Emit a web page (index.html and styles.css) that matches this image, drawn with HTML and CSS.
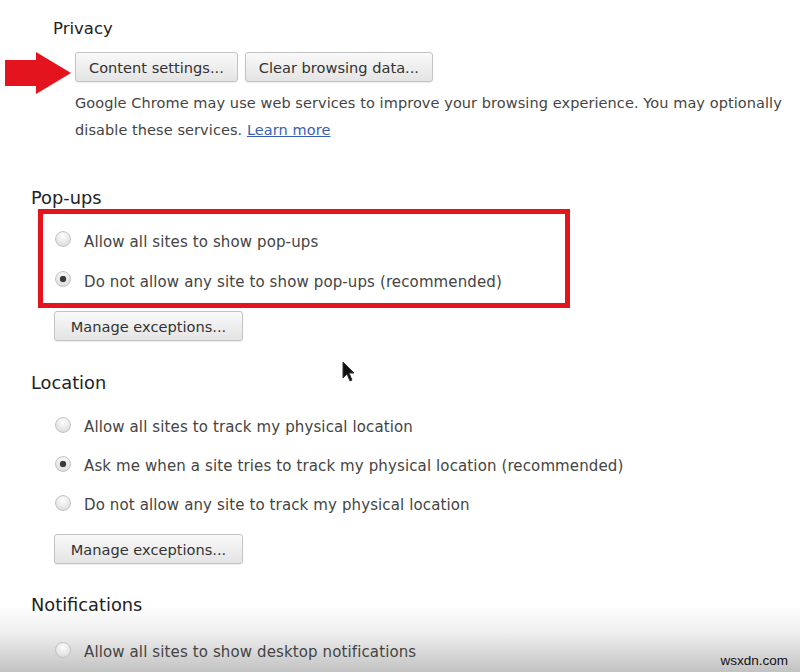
FILE: index.html
```html
<!DOCTYPE html>
<html>
<head>
<meta charset="utf-8">
<link rel="stylesheet" href="styles.css">
</head>
<body>
<div class="page">
  <section class="privacy">
    <h2 class="privacy-title">Privacy</h2>
    <div class="btn-row">
      <button class="btn">Content settings...</button>
      <button class="btn">Clear browsing data...</button>
    </div>
    <p class="desc">Google Chrome may use web services to improve your browsing experience. You may optionally disable these services. <a href="#" class="link">Learn more</a></p>
    <svg class="arrow" width="66" height="42" viewBox="0 0 66 42"><path d="M0 8 H31 V0 L66 21 L31 42 V34 H0 Z" fill="#e3141d"/></svg>
  </section>

  <section class="group popups">
    <h2 class="title">Pop-ups</h2>
    <div class="highlight">
      <label class="radio-row"><span class="radio"></span><span class="label">Allow all sites to show pop-ups</span></label>
      <label class="radio-row"><span class="radio checked"></span><span class="label">Do not allow any site to show pop-ups (recommended)</span></label>
    </div>
    <button class="btn manage">Manage exceptions...</button>
  </section>

  <section class="group location">
    <h2 class="title">Location</h2>
    <div class="options">
      <label class="radio-row"><span class="radio"></span><span class="label">Allow all sites to track my physical location</span></label>
      <label class="radio-row"><span class="radio checked"></span><span class="label">Ask me when a site tries to track my physical location (recommended)</span></label>
      <label class="radio-row"><span class="radio"></span><span class="label">Do not allow any site to track my physical location</span></label>
    </div>
    <button class="btn manage">Manage exceptions...</button>
  </section>

  <section class="group notifications">
    <h2 class="title">Notifications</h2>
    <div class="options">
      <label class="radio-row"><span class="radio"></span><span class="label">Allow all sites to show desktop notifications</span></label>
    </div>
  </section>

  <svg class="cursor" width="14" height="22" viewBox="0 0 14 22"><path d="M1 1 L1 17 L5 13 L8 20 L10 19 L7 12 L12 12 Z" fill="#111" stroke="#333" stroke-width="1"/></svg>
  <div class="watermark">wsxdn.com</div>
</div>
</body>
</html>
```
FILE: styles.css
```css
html, body {
  margin: 0;
  padding: 0;
}
body {
  width: 800px;
  height: 672px;
  overflow: hidden;
  background: linear-gradient(to bottom, #ffffff 0px, #ffffff 605px, #f0f0f0 632px, #c2c2c2 672px);
  font-family: "DejaVu Sans", Verdana, sans-serif;
  color: #3c3c3c;
}
.page {
  position: relative;
  height: 672px;
}
.privacy {
  position: relative;
  padding: 19px 0 0 75px;
  height: 150px;
  box-sizing: border-box;
}
.privacy-title {
  margin: 0 0 0 -22px;
  font-size: 16.5px;
  font-weight: normal;
  line-height: 20px;
  color: #222;
}
.btn-row {
  display: flex;
  gap: 7px;
  margin-top: 13px;
}
.btn {
  height: 30px;
  padding: 0 13px;
  font-family: inherit;
  font-size: 14.6px;
  color: #333;
  background: linear-gradient(to bottom, #f9f9f9, #e4e4e4);
  border: 1px solid #c3c3c3;
  border-radius: 3px;
  box-shadow: 0 1px 1px rgba(0,0,0,0.08);
}
.desc {
  margin: 8px 0 0 0;
  width: 720px;
  font-size: 14.5px;
  letter-spacing: 0.08px;
  line-height: 27px;
  color: #444;
}
.link {
  color: #3a5fb0;
  text-decoration: underline;
}
.arrow {
  position: absolute;
  left: 5px;
  top: 52px;
}
.group {
  padding-left: 31px;
}
.title {
  margin: 0;
  font-size: 17.8px;
  font-weight: normal;
  line-height: 20px;
  color: #222;
}
.popups .title {
  margin-top: 38px;
}
.highlight {
  margin: 1px 0 0 7px;
  width: 522px;
  border: 5px solid #e3141d;
  padding: 5px 0 4px 0;
}
.highlight .radio-row {
  padding-left: 12px;
}
.radio-row {
  display: flex;
  align-items: center;
  height: 40px;
  font-size: 15px;
  letter-spacing: 0.12px;
  color: #444;
}
.label {
  margin-top: 5px;
}
.options {
  margin-top: 22px;
}
.options .radio-row {
  height: 39px;
  padding-left: 24px;
}
.radio {
  flex: none;
  width: 16px;
  height: 16px;
  margin-right: 13px;
  border-radius: 50%;
  box-sizing: border-box;
  border: 1px solid #c4c4c4;
  background: radial-gradient(circle at 50% 30%, #fdfdfd 0%, #e6e6e6 60%, #d2d2d2 100%);
  position: relative;
}
.radio.checked::after {
  content: "";
  position: absolute;
  left: 4px;
  top: 4px;
  width: 6px;
  height: 6px;
  border-radius: 50%;
  background: #3a3a3a;
  box-shadow: 0 0 1px #555;
}
.manage {
  margin: 3px 0 0 23px;
  width: 189px;
  padding: 0;
  text-align: center;
}
.location .title {
  margin-top: 32px;
}
.location .options {
  margin-top: 12px;
}
.location .manage {
  margin-top: 12px;
}
.notifications .title {
  margin-top: 31px;
}
.notifications .options {
  margin-top: 15px;
}
.cursor {
  position: absolute;
  left: 342px;
  top: 361px;
  filter: blur(0.6px);
}
.watermark {
  position: absolute;
  right: 12px;
  bottom: 4px;
  font-family: "Liberation Sans", Arial, sans-serif;
  font-size: 13.5px;
  color: #111;
}
```
